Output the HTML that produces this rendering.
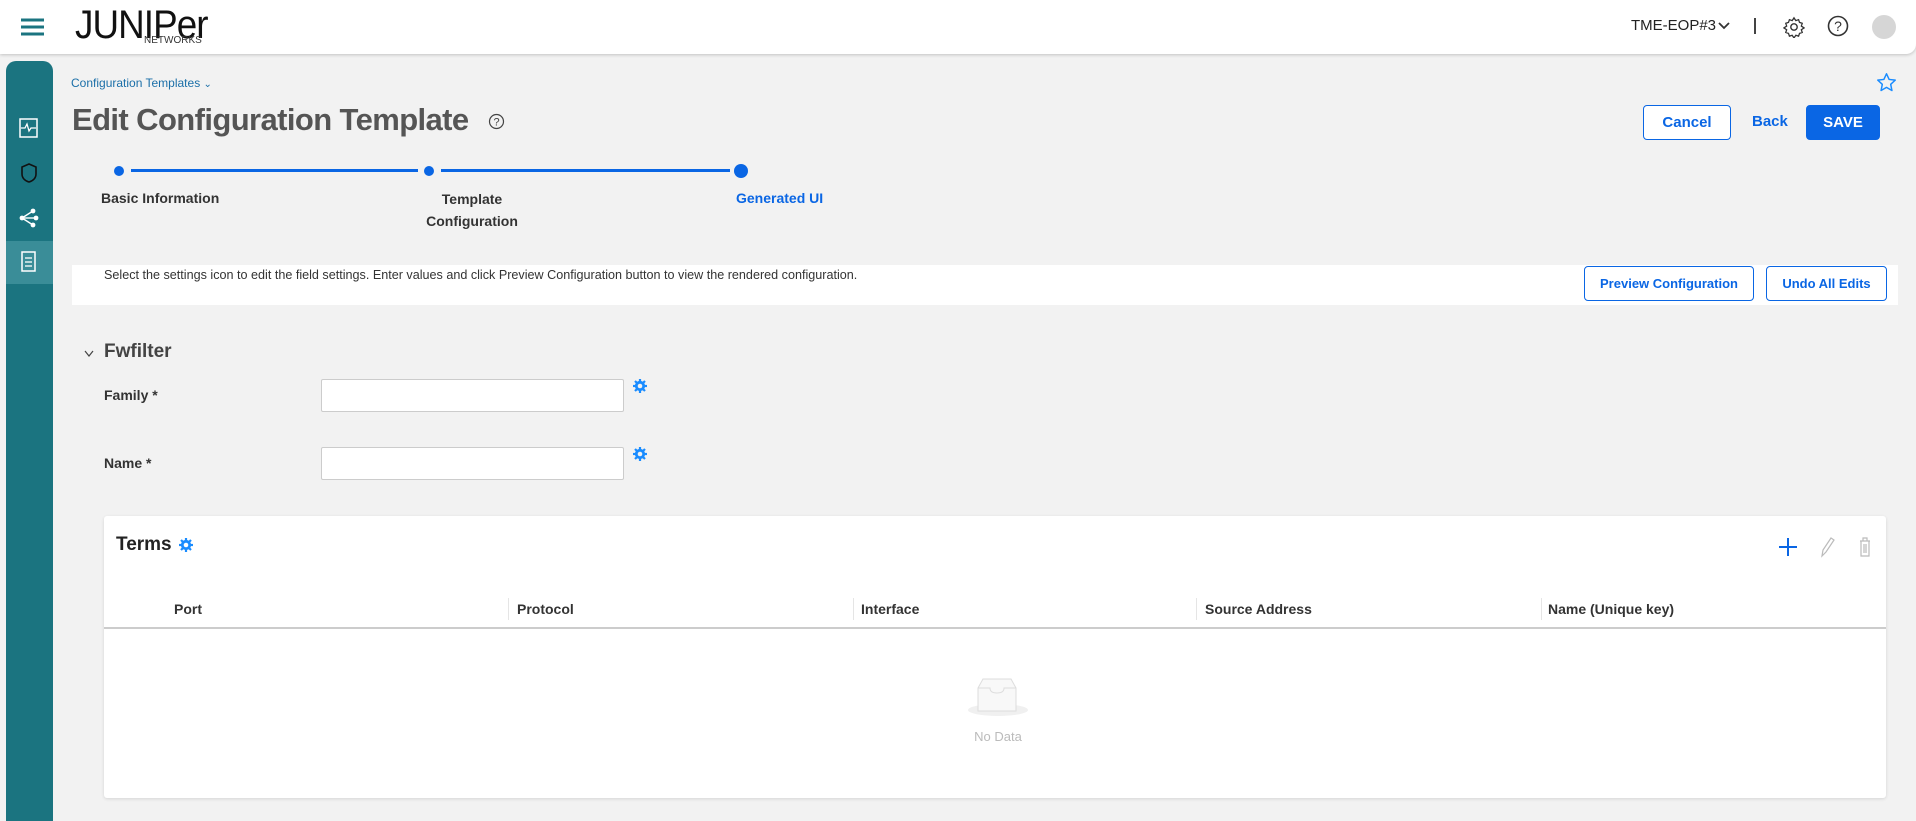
<!DOCTYPE html>
<html><head><meta charset="utf-8"><style>
*{box-sizing:border-box;margin:0;padding:0}
body{width:1916px;height:810px;overflow:hidden;background:#f2f2f2;font-family:"Liberation Sans",sans-serif;position:relative;color:#333}
.a{position:absolute}
.hdr{left:0;top:0;width:1916px;height:54px;background:#fff;box-shadow:0 1px 3px rgba(0,0,0,.2);border-bottom-right-radius:10px}
.side{left:6px;top:61px;width:47px;height:760px;background:#1b7480;border-radius:10px 10px 0 0}
.btn{border:1.5px solid #0a66e4;border-radius:4px;background:#fff;color:#0a66e4;font-weight:bold;font-size:14px;display:flex;align-items:center;justify-content:center}
.lbl{font-size:14px;font-weight:bold;color:#333}
.inp{background:#fff;border:1px solid #ccc;border-radius:2px}
.th{font-size:14px;font-weight:bold;color:#333;top:601px}
.sep{top:598px;width:1px;height:22px;background:#e5e5e5}
</style></head><body>
<div class="a hdr"></div>
<svg class="a" style="left:21px;top:18px" width="24" height="18"><g stroke="#1b7480" stroke-width="3"><line x1="0" y1="2" x2="23" y2="2"/><line x1="0" y1="9" x2="23" y2="9"/><line x1="0" y1="16" x2="23" y2="16"/></g></svg>
<div class="a" style="left:75px;top:3px;font-size:40px;letter-spacing:-1px;color:#111;transform:scaleX(.92);transform-origin:left">JUNIPer</div>
<div class="a" style="left:144px;top:35px;font-size:10px;color:#333">NETWORKS</div>
<div class="a" style="left:1631px;top:17px;font-size:15px;color:#222">TME-EOP#3</div>
<svg class="a" style="left:1718px;top:22px" width="12" height="8"><path d="M1 1l5 5 5-5" fill="none" stroke="#333" stroke-width="1.8"/></svg>
<div class="a" style="left:1754px;top:18px;width:1.5px;height:16px;background:#444"></div>
<svg class="a" style="left:1783px;top:16px" width="22" height="22" viewBox="0 0 24 24"><circle cx="12" cy="12" r="3.5" fill="none" stroke="#333" stroke-width="1.5"/><path d="M12 2l2 3 3-1 1 3 3 1-1 3 3 2-3 2 1 3-3 1-1 3-3-1-2 3-2-3-3 1-1-3-3-1 1-3-3-2 3-2-1-3 3-1 1-3 3 1z" fill="none" stroke="#333" stroke-width="1.4"/></svg>
<svg class="a" style="left:1827px;top:15px" width="22" height="22"><circle cx="11" cy="11" r="9.5" fill="none" stroke="#333" stroke-width="1.6"/><text x="11" y="16" font-size="14" text-anchor="middle" fill="#333" font-family="Liberation Sans">?</text></svg>
<div class="a" style="left:1872px;top:15px;width:24px;height:24px;border-radius:50%;background:#d6d6d6"></div>

<div class="a side"></div>
<div class="a" style="left:6px;top:241px;width:47px;height:43px;background:#3a8d98"></div>
<svg class="a" style="left:18px;top:117px" width="22" height="22"><rect x="2" y="2" width="17" height="18" fill="none" stroke="#fff" stroke-width="1.5"/><path d="M3 11h4l2-4 2 7 2-3h5" fill="none" stroke="#fff" stroke-width="1.3"/></svg>
<svg class="a" style="left:19px;top:162px" width="20" height="22"><path d="M10 2l7 3v7c0 4-3 7-7 8-4-1-7-4-7-8V5z" fill="none" stroke="#111" stroke-width="1.6"/></svg>
<svg class="a" style="left:18px;top:207px" width="22" height="22"><g stroke="#fff" stroke-width="1.4"><line x1="4" y1="11" x2="15" y2="4"/><line x1="4" y1="11" x2="17" y2="11"/><line x1="4" y1="11" x2="15" y2="18"/></g><g fill="#fff"><circle cx="4" cy="11" r="2.4"/><circle cx="15" cy="4" r="2.4"/><circle cx="18" cy="11" r="2.4"/><circle cx="15" cy="18" r="2.4"/></g></svg>
<svg class="a" style="left:20px;top:251px" width="18" height="22"><rect x="2" y="1" width="13" height="19" fill="none" stroke="#fff" stroke-width="1.5"/><g stroke="#fff" stroke-width="1.3"><line x1="5" y1="7" x2="12" y2="7"/><line x1="5" y1="11" x2="12" y2="11"/><line x1="5" y1="15" x2="12" y2="15"/></g></svg>

<div class="a" style="left:71px;top:76px;font-size:12px;color:#1b6fa8">Configuration Templates <span style="font-size:10px">&#8964;</span></div>
<div class="a" style="left:72px;top:102px;font-size:31px;font-weight:bold;color:#555;letter-spacing:-.6px">Edit Configuration Template</div>
<svg class="a" style="left:488px;top:113px" width="17" height="17"><circle cx="8.5" cy="8.5" r="7" fill="none" stroke="#444" stroke-width="1.2"/><text x="8.5" y="12.5" font-size="11" text-anchor="middle" fill="#444" font-family="Liberation Sans">?</text></svg>
<svg class="a" style="left:1876px;top:72px" width="21" height="21" viewBox="0 0 24 24"><path d="M12 2l3 6.5 7 .8-5.2 4.8 1.4 7L12 17.6 5.8 21.1l1.4-7L2 9.3l7-.8z" fill="none" stroke="#1a8cff" stroke-width="1.7" stroke-linejoin="round"/></svg>
<div class="a btn" style="left:1643px;top:105px;width:88px;height:35px;font-size:15px">Cancel</div>
<div class="a" style="left:1752px;top:113px;font-size:15px;font-weight:bold;color:#0a66e4">Back</div>
<div class="a btn" style="left:1806px;top:105px;width:74px;height:35px;font-size:15px;background:#0a66e4;color:#fff">SAVE</div>

<div class="a" style="left:131px;top:169px;width:287px;height:3px;background:#0a66e4"></div>
<div class="a" style="left:441px;top:169px;width:289px;height:3px;background:#0a66e4"></div>
<div class="a" style="left:114px;top:166px;width:10px;height:10px;border-radius:50%;background:#0a66e4"></div>
<div class="a" style="left:424px;top:166px;width:10px;height:10px;border-radius:50%;background:#0a66e4"></div>
<div class="a" style="left:734px;top:164px;width:14px;height:14px;border-radius:50%;background:#0a66e4"></div>
<div class="a lbl" style="left:101px;top:190px">Basic Information</div>
<div class="a lbl" style="left:400px;top:188px;width:144px;text-align:center;line-height:22px">Template<br>Configuration</div>
<div class="a lbl" style="left:736px;top:190px;color:#0a66e4">Generated UI</div>

<div class="a" style="left:72px;top:265px;width:1826px;height:40px;background:#fff"></div>
<div class="a" style="left:104px;top:268px;font-size:12.6px;color:#333">Select the settings icon to edit the field settings. Enter values and click Preview Configuration button to view the rendered configuration.</div>
<div class="a btn" style="left:1584px;top:266px;width:170px;height:35px;font-size:13px">Preview Configuration</div>
<div class="a btn" style="left:1766px;top:266px;width:121px;height:35px;font-size:13px">Undo All Edits</div>

<svg class="a" style="left:84px;top:350px" width="10" height="8"><path d="M1 1l4 5 4-5" fill="none" stroke="#444" stroke-width="1.2"/></svg>
<div class="a" style="left:104px;top:341px;font-size:19px;font-weight:bold;color:#444">Fwfilter</div>
<div class="a lbl" style="left:104px;top:387px">Family *</div>
<div class="a inp" style="left:321px;top:379px;width:303px;height:33px"></div>
<div class="a lbl" style="left:104px;top:455px">Name *</div>
<div class="a inp" style="left:321px;top:447px;width:303px;height:33px"></div>
<svg class="a" style="left:632px;top:378px" width="16" height="16" viewBox="0 0 16 16"><circle cx="8" cy="8" r="4" fill="none" stroke="#1a8cff" stroke-width="2.2"/><g stroke="#1a8cff" stroke-width="2.2"><line x1="8" y1="1" x2="8" y2="15"/><line x1="1" y1="8" x2="15" y2="8"/><line x1="3" y1="3" x2="13" y2="13"/><line x1="13" y1="3" x2="3" y2="13"/></g><circle cx="8" cy="8" r="2.3" fill="#f2f2f2"/></svg>
<svg class="a" style="left:632px;top:446px" width="16" height="16" viewBox="0 0 16 16"><circle cx="8" cy="8" r="4" fill="none" stroke="#1a8cff" stroke-width="2.2"/><g stroke="#1a8cff" stroke-width="2.2"><line x1="8" y1="1" x2="8" y2="15"/><line x1="1" y1="8" x2="15" y2="8"/><line x1="3" y1="3" x2="13" y2="13"/><line x1="13" y1="3" x2="3" y2="13"/></g><circle cx="8" cy="8" r="2.3" fill="#f2f2f2"/></svg>

<div class="a" style="left:104px;top:516px;width:1782px;height:282px;background:#fff;border-radius:3px;box-shadow:0 1px 3px rgba(0,0,0,.12)"></div>
<div class="a" style="left:116px;top:534px;font-size:19px;font-weight:bold;color:#222">Terms</div>
<svg class="a" style="left:178px;top:537px" width="16" height="16" viewBox="0 0 16 16"><circle cx="8" cy="8" r="4" fill="none" stroke="#1a8cff" stroke-width="2.2"/><g stroke="#1a8cff" stroke-width="2.2"><line x1="8" y1="1" x2="8" y2="15"/><line x1="1" y1="8" x2="15" y2="8"/><line x1="3" y1="3" x2="13" y2="13"/><line x1="13" y1="3" x2="3" y2="13"/></g><circle cx="8" cy="8" r="2.3" fill="#fff"/></svg>
<svg class="a" style="left:1779px;top:538px" width="18" height="18"><g stroke="#0a66e4" stroke-width="2"><line x1="9" y1="0" x2="9" y2="18"/><line x1="0" y1="9" x2="18" y2="9"/></g></svg>
<svg class="a" style="left:1819px;top:536px" width="16" height="22"><path d="M3 20l1-6 8-12 3 2-8 12z" fill="none" stroke="#bbb" stroke-width="1.2"/></svg>
<svg class="a" style="left:1858px;top:536px" width="14" height="22"><path d="M2 5h10M5 5V2h4v3M3 5v15h8V5M6 8v9M8 8v9" fill="none" stroke="#bbb" stroke-width="1.2"/></svg>

<div class="a th" style="left:174px">Port</div>
<div class="a sep" style="left:508px"></div>
<div class="a th" style="left:517px">Protocol</div>
<div class="a sep" style="left:853px"></div>
<div class="a th" style="left:861px">Interface</div>
<div class="a sep" style="left:1196px"></div>
<div class="a th" style="left:1205px">Source Address</div>
<div class="a sep" style="left:1541px"></div>
<div class="a th" style="left:1548px">Name (Unique key)</div>
<div class="a" style="left:104px;top:627px;width:1782px;height:1.5px;background:#ccc"></div>

<div class="a" style="left:968px;top:704px;width:60px;height:12px;border-radius:50%;background:#f0f0f0"></div>
<svg class="a" style="left:972px;top:678px" width="50" height="36"><path d="M6 10L11 1h28l5 9v23H6z" fill="#f8f8f8" stroke="#ddd"/><path d="M6 10h12c0 4 3 5 7 5s7-1 7-5h12" fill="none" stroke="#ddd"/></svg>
<div class="a" style="left:960px;top:729px;width:76px;text-align:center;font-size:13px;color:#bbb">No Data</div>
</body></html>
